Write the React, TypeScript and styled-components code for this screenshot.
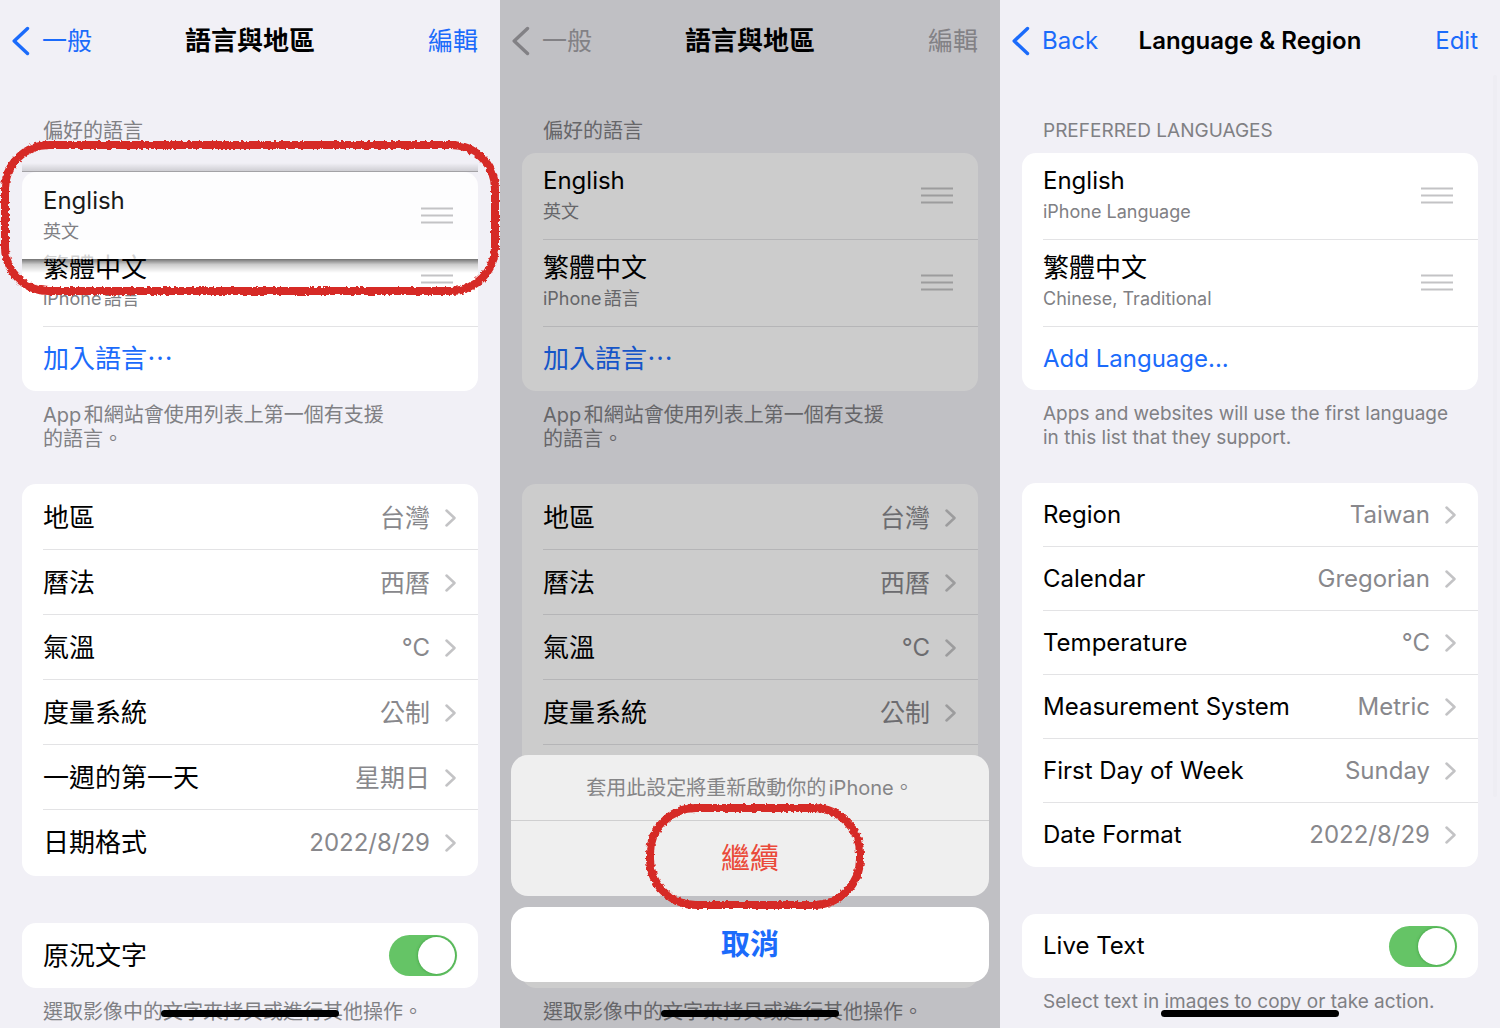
import React from "react";
import styled, { createGlobalStyle, css } from "styled-components";

type Lang = "zh" | "en";

const color = {
  page: "#f1f0f6",
  card: "#ffffff",
  ink: "#000000",
  tint: "#1b6bfb",
  muted: "#808084",
  value: "#88888c",
  glyph: "#c3c3c5",
  line: "#e3e3e5",
  danger: "#ea4a3a",
  marker: "#d62a26",
};

const GlobalStyle = createGlobalStyle`
  *, *::before, *::after { box-sizing: border-box; }
  body { margin: 0; background: ${color.page}; }
  button { font: inherit; color: inherit; background: none; border: 0; padding: 0; margin: 0; text-align: inherit; cursor: pointer; }
  h1, h2, p, ul { margin: 0; padding: 0; font: inherit; list-style: none; }
  svg { display: block; }
`;

const Board = styled.main`
  display: grid;
  grid-template-columns: repeat(3, minmax(0, 1fr));
  height: 100vh;
  min-height: 1028px;
  font-family: Inter, "Noto Sans CJK TC", sans-serif;
  text-autospace: normal;
`;

const Screen = styled.section`
  position: relative;
  overflow: hidden;
  background: ${color.page};
  color: ${color.ink};
`;

const NavBar = styled.header<{ $lang: Lang; $dimmed?: boolean }>`
  display: grid;
  grid-template-columns: 1fr auto 1fr;
  align-items: center;
  height: 82px;
  padding: 0 22px;
  font-size: ${(p) => (p.$lang === "zh" ? 25 : 24)}px;
  line-height: 32px;
  color: ${(p) => (p.$dimmed ? "#a3a2a7" : color.tint)};
`;

const BackButton = styled.button`
  display: flex;
  align-items: center;
  gap: 12px;
  justify-self: start;
  margin-left: -10px;
`;

const NavTitle = styled.h1<{ $lang: Lang }>`
  font-size: ${(p) => (p.$lang === "zh" ? 26 : 24)}px;
  font-weight: 600;
  color: ${color.ink};
`;

const EditButton = styled.button`
  justify-self: end;
`;

const SectionTitle = styled.h2<{ $lang: Lang }>`
  padding: 37px 43px 10px;
  font-size: ${(p) => (p.$lang === "zh" ? 20 : 19)}px;
  line-height: 24px;
  color: ${color.muted};
`;

const Card = styled.ul<{ $open?: boolean; $gap?: number }>`
  margin: ${(p) => p.$gap ?? 0}px 22px 0;
  border-radius: 14px;
  background: ${(p) => (p.$open ? "transparent" : color.card)};
`;

const SettingsCard = styled(Card)<{ $lang: Lang }>`
  padding: ${(p) => (p.$lang === "zh" ? 1 : 0)}px 0;
`;

const rowLine = css`
  &::after {
    content: "";
    position: absolute;
    left: 21px;
    right: 0;
    bottom: 0;
    height: 1px;
    background: ${color.line};
  }
  &:last-child::after {
    display: none;
  }
`;

const LanguageItem = styled.li<{ $slot?: boolean; $filled?: boolean }>`
  position: relative;
  height: ${(p) => (p.$filled ? 86 : 87)}px;
  height: 87px;
  background: ${(p) => (p.$filled ? color.card : "transparent")};
  ${(p) => !p.$slot && rowLine}
`;

const LanguageBody = styled.div`
  display: flex;
  align-items: center;
  justify-content: space-between;
  height: 86px;
  padding: 0 25px 0 21px;
`;

const LanguageName = styled.p<{ $cjk?: boolean }>`
  font-size: ${(p) => (p.$cjk ? 26 : 24)}px;
  line-height: 32px;
`;

const LanguageNote = styled.p`
  font-size: 18px;
  line-height: 30px;
  color: ${color.muted};
`;

/* The row being dragged floats over the list and casts a shadow both ways. */
const Lifted = styled.div`
  position: absolute;
  z-index: 1;
  top: 19px;
  left: 0;
  right: 0;
  height: 87px;
  padding-top: 1px;
  border-radius: 14px 14px 0 0;
  background: rgba(255, 255, 255, 0.82);
  color: #1a1a1a;
  &::before,
  &::after {
    content: "";
    position: absolute;
    left: 0;
    right: 0;
  }
  &::before {
    bottom: 100%;
    height: 9px;
    border-bottom: 1px solid #a3a2a6;
    background: linear-gradient(rgba(0, 0, 0, 0), rgba(0, 0, 0, 0.14));
  }
  &::after {
    top: 100%;
    height: 14px;
    background: linear-gradient(rgba(0, 0, 0, 0.55), rgba(0, 0, 0, 0.2) 40%, rgba(0, 0, 0, 0));
  }
`;

const AddItem = styled.li<{ $lang: Lang; $filled?: boolean }>`
  height: ${(p) => (p.$lang === "zh" ? 64 : 63)}px;
  border-radius: 0 0 14px 14px;
  background: ${(p) => (p.$filled ? color.card : "transparent")};
`;

const AddButton = styled.button<{ $lang: Lang }>`
  width: 100%;
  height: 100%;
  padding: ${(p) => (p.$lang === "zh" ? "0 21px 4px" : "0 21px")};
  color: ${color.tint};
  font-size: ${(p) => (p.$lang === "zh" ? 26 : 24)}px;
  font-family: ${(p) => (p.$lang === "zh" ? '"Noto Sans CJK TC", sans-serif' : "inherit")};
  line-height: 32px;
`;

const Footnote = styled.p<{ $lang: Lang }>`
  padding: 12px 43px 0;
  font-size: ${(p) => (p.$lang === "zh" ? 20 : 19)}px;
  line-height: 24px;
  color: ${color.muted};
`;

const SettingItem = styled.li`
  position: relative;
  ${rowLine}
`;

const SettingButton = styled.button<{ $lang: Lang }>`
  display: flex;
  align-items: center;
  width: 100%;
  height: ${(p) => (p.$lang === "zh" ? 65 : 64)}px;
  padding: 0 22px 0 21px;
  font-size: ${(p) => (p.$lang === "zh" ? 26 : 24)}px;
  line-height: 32px;
`;

const SettingValue = styled.span<{ $latin?: boolean }>`
  margin: 0 15px 0 auto;
  font-size: ${(p) => (p.$latin ? 24 : 25)}px;
  color: ${color.value};
`;

const ToggleRow = styled.label<{ $lang: Lang }>`
  display: flex;
  align-items: center;
  justify-content: space-between;
  height: ${(p) => (p.$lang === "zh" ? 65 : 64)}px;
  padding: 0 21px;
  font-size: ${(p) => (p.$lang === "zh" ? 26 : 24)}px;
  line-height: 32px;
`;

const Toggle = styled.input`
  appearance: none;
  width: 68px;
  height: 41px;
  margin: 0;
  padding: 2px;
  border-radius: 21px;
  background: #d9d9dc;
  cursor: pointer;
  &::before {
    content: "";
    display: block;
    width: 37px;
    height: 37px;
    border-radius: 50%;
    background: #fff;
    box-shadow: 0 0 3px rgba(0, 110, 10, 0.5);
  }
  &:checked {
    background: #65c466;
  }
  &:checked::before {
    margin-left: 27px;
  }
`;

const HomeIndicator = styled.div`
  position: absolute;
  left: 50%;
  bottom: 11px;
  width: 178px;
  height: 7px;
  margin-left: -89px;
  border-radius: 4px;
  background: #000;
`;

const ScrollThumb = styled.div`
  position: absolute;
  top: 75px;
  right: 3px;
  width: 4px;
  height: 722px;
  border-radius: 2px;
  background: #eeedf3;
`;

const Scrim = styled.div`
  position: absolute;
  inset: 0;
  display: flex;
  flex-direction: column;
  justify-content: flex-end;
  gap: 11px;
  padding: 0 11px 46px;
  background: rgba(0, 0, 0, 0.2);
`;

const Sheet = styled.div`
  border-radius: 17px;
  background: #efefef;
  text-align: center;
`;

const SheetMessage = styled.p`
  height: 66px;
  border-bottom: 1px solid #cfcfd0;
  font-size: 20px;
  line-height: 66px;
  color: #858587;
`;

const SheetButton = styled.button<{ $cancel?: boolean }>`
  height: 75px;
  width: 100%;
  border-radius: 17px;
  background: ${(p) => (p.$cancel ? "#fff" : "transparent")};
  color: ${(p) => (p.$cancel ? color.tint : color.danger)};
  font-size: 29px;
  font-weight: ${(p) => (p.$cancel ? 600 : 400)};
  line-height: 40px;
  text-align: center;
`;

const Marker = styled.svg<{ $left: number; $top: number }>`
  position: absolute;
  z-index: 2;
  left: ${(p) => p.$left}px;
  top: ${(p) => p.$top}px;
  overflow: visible;
  pointer-events: none;
`;

function BackChevron() {
  return (
    <svg width="18" height="30" viewBox="0 0 18 30" fill="none" aria-hidden="true">
      <path d="M15.5 2.5 2.2 15 15.5 27.5" stroke="currentColor" strokeWidth="3.4" strokeLinecap="round" strokeLinejoin="round" />
    </svg>
  );
}

function Disclosure() {
  return (
    <svg width="11" height="18" viewBox="0 0 11 18" fill="none" aria-hidden="true">
      <path d="M1.5 1.5 9.5 9 1.5 16.5" stroke={color.glyph} strokeWidth="2.5" strokeLinecap="round" strokeLinejoin="round" />
    </svg>
  );
}

function Grip() {
  return (
    <svg width="32" height="18" viewBox="0 0 32 18" aria-hidden="true">
      <path d="M0 1.5h32M0 8.5h32M0 15.5h32" stroke={color.glyph} strokeWidth="1.8" />
    </svg>
  );
}

/* A crayon ring: a rounded stroke whose edge is roughened by noise. */
function CrayonRing(props: { id: string; left: number; top: number; width: number; height: number; radius: number }) {
  const { id, left, top, width, height, radius } = props;
  const box = { x: 4, y: 4, width: width - 8, height: height - 8, rx: radius, fill: "none", stroke: color.marker };
  return (
    <Marker $left={left} $top={top} width={width} height={height} aria-hidden="true">
      <filter id={id} filterUnits="userSpaceOnUse" x="-8" y="-8" width={width + 16} height={height + 16} colorInterpolationFilters="sRGB">
        <feTurbulence type="fractalNoise" baseFrequency="0.3" numOctaves="2" seed="7" result="noise" />
        <feDisplacementMap in="SourceGraphic" in2="noise" scale="4" xChannelSelector="R" yChannelSelector="G" />
      </filter>
      <g filter={`url(#${id})`}>
        <rect {...box} strokeWidth="8" />
      </g>
    </Marker>
  );
}

function LanguageContent({ name, note, cjk }: { name: string; note: string; cjk?: boolean }) {
  return (
    <LanguageBody>
      <div>
        <LanguageName $cjk={cjk}>{name}</LanguageName>
        <LanguageNote>{note}</LanguageNote>
      </div>
      <button type="button" aria-label={name}>
        <Grip />
      </button>
    </LanguageBody>
  );
}

const copy = {
  zh: {
    back: "一般",
    title: "語言與地區",
    edit: "編輯",
    preferred: "偏好的語言",
    first: "英文",
    second: "iPhone語言",
    add: "加入語言…",
    listNote: ["App和網站會使用列表上第一個有支援", "的語言。"],
    settings: [
      ["地區", "台灣"],
      ["曆法", "西曆"],
      ["氣溫", "°C"],
      ["度量系統", "公制"],
      ["一週的第一天", "星期日"],
      ["日期格式", "2022/8/29"],
    ],
    liveText: "原況文字",
    liveNote: "選取影像中的文字來拷貝或進行其他操作。",
  },
  en: {
    back: "Back",
    title: "Language & Region",
    edit: "Edit",
    preferred: "PREFERRED LANGUAGES",
    first: "iPhone Language",
    second: "Chinese, Traditional",
    add: "Add Language...",
    listNote: ["Apps and websites will use the first language", "in this list that they support."],
    settings: [
      ["Region", "Taiwan"],
      ["Calendar", "Gregorian"],
      ["Temperature", "°C"],
      ["Measurement System", "Metric"],
      ["First Day of Week", "Sunday"],
      ["Date Format", "2022/8/29"],
    ],
    liveText: "Live Text",
    liveNote: "Select text in images to copy or take action.",
  },
};

function Settings(props: { lang: Lang; dragging?: boolean; dimmed?: boolean; children?: React.ReactNode }) {
  const { lang, dragging, dimmed, children } = props;
  const t = copy[lang];
  return (
    <Screen lang={lang === "zh" ? "zh-Hant" : "en"}>
      <NavBar $lang={lang} $dimmed={dimmed}>
        <BackButton type="button">
          <BackChevron />
          {t.back}
        </BackButton>
        <NavTitle $lang={lang}>{t.title}</NavTitle>
        <EditButton type="button">{t.edit}</EditButton>
      </NavBar>

      <SectionTitle $lang={lang}>{t.preferred}</SectionTitle>
      <Card $open={dragging}>
        <LanguageItem $slot={dragging}>
          {dragging ? (
            <Lifted>
              <LanguageContent name="English" note={t.first} />
            </Lifted>
          ) : (
            <LanguageContent name="English" note={t.first} />
          )}
        </LanguageItem>
        <LanguageItem $filled={dragging}>
          <LanguageContent name="繁體中文" note={t.second} cjk />
        </LanguageItem>
        <AddItem $lang={lang} $filled={dragging}>
          <AddButton type="button" $lang={lang}>
            {t.add}
          </AddButton>
        </AddItem>
      </Card>
      <Footnote $lang={lang}>
        {t.listNote[0]}
        <br />
        {t.listNote[1]}
      </Footnote>

      <SettingsCard $gap={33} $lang={lang}>
        {t.settings.map(([label, value]) => (
          <SettingItem key={label}>
            <SettingButton type="button" $lang={lang}>
              {label}
              <SettingValue $latin={/^[\x20-\xff]+$/.test(value)}>{value}</SettingValue>
              <Disclosure />
            </SettingButton>
          </SettingItem>
        ))}
      </SettingsCard>

      <Card $gap={47} as="div">
        <ToggleRow $lang={lang}>
          {t.liveText}
          <Toggle type="checkbox" role="switch" defaultChecked />
        </ToggleRow>
      </Card>
      <Footnote $lang={lang}>{t.liveNote}</Footnote>

      {children}
      <HomeIndicator />
    </Screen>
  );
}

export default function App() {
  return (
    <>
      <GlobalStyle />
      <Board>
        <Settings lang="zh" dragging>
          <CrayonRing id="crayon-wide" left={1} top={141} width={498} height={154} radius={44} />
        </Settings>
        <Settings lang="zh" dimmed>
          <Scrim>
            <Sheet role="dialog" aria-label="套用此設定將重新啟動你的iPhone。">
              <SheetMessage>套用此設定將重新啟動你的iPhone。</SheetMessage>
              <SheetButton type="button">繼續</SheetButton>
            </Sheet>
            <SheetButton type="button" $cancel>
              取消
            </SheetButton>
          </Scrim>
          <CrayonRing id="crayon-small" left={146} top={804} width={218} height={105} radius={46} />
        </Settings>
        <Settings lang="en">
          <ScrollThumb />
        </Settings>
      </Board>
    </>
  );
}
